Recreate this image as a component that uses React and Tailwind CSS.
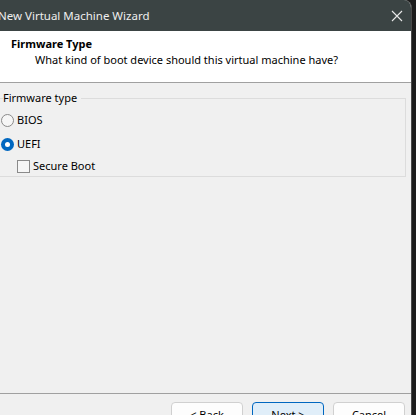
import React from "react";

const Radio = ({ checked }) =>
  checked ? (
    <span className="w-[13px] h-[13px] rounded-full bg-[#0067c0] flex items-center justify-center shrink-0">
      <span className="w-[5px] h-[5px] rounded-full bg-white" />
    </span>
  ) : (
    <span className="w-[13px] h-[13px] rounded-full border border-[#8a8a8a] bg-[#f6f6f6] shrink-0" />
  );

const Button = ({ label, primary }) => (
  <div
    className={
      "w-[72px] h-[23px] rounded-[4px] border flex items-center justify-center pt-[4px] " +
      (primary ? "border-[#0067c0] bg-[#e0eef9]" : "border-[#d0d0d0] bg-[#fdfdfd]")
    }
  >
    {label}
  </div>
);

export default function App() {
  return (
    <div className="w-[416px] h-[415px] bg-[#1c1c1c] flex overflow-hidden text-[11px] text-black font-['Noto_Sans',sans-serif]">
      <div className="w-[412px] h-full flex flex-col bg-[#f0f0f0] rounded-tr-[8px] overflow-hidden border-r border-[#4a4a4a]">
        <div className="h-[31px] bg-[#3b4444] flex items-center justify-between shrink-0">
          <span className="ml-[-2px] text-[11.5px] text-[#eeeeee]">New Virtual Machine Wizard</span>
          <svg className="mr-[8px]" width="12" height="12" viewBox="0 0 12 12">
            <path d="M1 1 L11 11 M11 1 L1 11" stroke="#e8e8e8" strokeWidth="1.1" />
          </svg>
        </div>
        <div className="h-[52px] bg-white border-b border-[#a0a0a0] shrink-0 pt-[5px]">
          <div className="ml-[11px] font-bold leading-[16px]">Firmware Type</div>
          <div className="ml-[35px] leading-[16px]">
            What kind of boot device should this virtual machine have?
          </div>
        </div>
        <div className="flex-1 pt-[7px]">
          <fieldset className="ml-[-4px] w-[410px] h-[87px] border border-[#dcdcdc] px-0">
            <legend className="ml-[6px] px-0 pr-[4px] leading-[16px]">Firmware type</legend>
            <div className="flex items-center gap-[3px] ml-[4px] mt-[6px] h-[16px]">
              <Radio />
              <span>BIOS</span>
            </div>
            <div className="flex items-center gap-[3px] ml-[4px] mt-[8px] h-[16px]">
              <Radio checked />
              <span>UEFI</span>
            </div>
            <div className="flex items-center gap-[3px] ml-[20px] mt-[6px] h-[16px]">
              <span className="w-[13px] h-[13px] border border-[#8a8a8a] bg-[#f6f6f6] shrink-0" />
              <span>Secure Boot</span>
            </div>
          </fieldset>
        </div>
        <div className="h-[22px] border-t border-[#a0a0a0] shrink-0 flex items-start justify-end gap-[9px] pt-[8px] pr-[6px]">
          <Button label="< Back" />
          <Button label="Next >" primary />
          <Button label="Cancel" />
        </div>
      </div>
    </div>
  );
}
